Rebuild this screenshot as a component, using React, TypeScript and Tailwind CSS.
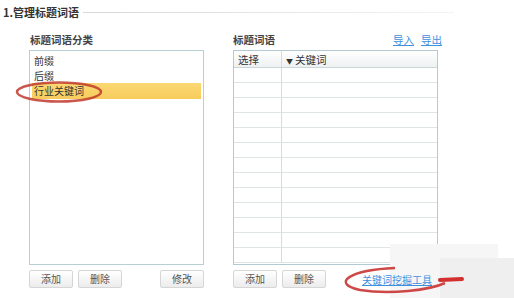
import React from 'react';

const font = { fontFamily: '"Noto Sans CJK SC", "Noto Sans", sans-serif' };

const Btn: React.FC<{ label: string; className?: string }> = ({ label, className = '' }) => (
  <button
    className={`h-[18px] w-[44px] rounded-[2px] border border-[#d6d6d6] bg-gradient-to-b from-white to-[#ececec] text-[10px] leading-none text-[#555] ${className}`}
  >
    {label}
  </button>
);

export default function App() {
  const rows = Array.from({ length: 13 });

  return (
    <div className="relative h-[298px] w-[514px] overflow-hidden bg-white text-[11px] text-[#333]" style={font}>
      {/* faded white patch over the table corner */}
      <div className="absolute left-[390px] top-[244px] z-10 h-[54px] w-[108px] bg-[#f6f6f6]" />
      <div className="absolute left-[440px] top-[258px] z-10 h-[40px] w-[74px] bg-[#efefef]" />

      {/* section title */}
      <div className="flex items-center pl-[3px] pr-[60px] pt-[4px]">
        <span className="whitespace-nowrap text-[11px] font-bold leading-[16px] text-[#333]">1.管理标题词语</span>
        <div className="ml-[4px] h-px flex-1 bg-gradient-to-r from-[#d8d8d8] to-[#f4f4f4]" />
      </div>

      <div className="mt-[12px] flex">
        {/* left panel */}
        <div className="ml-[29px] flex w-[175px] flex-col">
          <div className="h-[16px] pl-[1px] text-[10.5px] font-bold leading-[16px] text-[#444]">标题词语分类</div>
          <div className="mt-[2px] h-[215px] border border-[#b9cfd6] bg-white px-[2px] pt-[2px]">
            <div className="h-[15px] pl-[2px] leading-[15px] text-[10px]">前缀</div>
            <div className="h-[15px] pl-[2px] leading-[15px] text-[10px]">后缀</div>
            <div className="h-[16px] bg-gradient-to-b from-[#fbd873] to-[#f7cc5c] pl-[2px] leading-[16px] text-[10px]">行业关键词</div>
          </div>
          <div className="mt-[5px] flex">
            <Btn label="添加" />
            <Btn label="删除" className="ml-[5px]" />
            <Btn label="修改" className="ml-auto" />
          </div>
        </div>

        {/* right panel */}
        <div className="ml-[29px] flex w-[205px] flex-col">
          <div className="flex h-[16px] items-center">
            <span className="text-[10.5px] font-bold leading-[16px] text-[#444]">标题词语</span>
            <span className="ml-auto text-[10.5px] text-[#3d8fe0] underline">导入</span>
            <span className="ml-[7px] mr-[-4px] text-[10.5px] text-[#3d8fe0] underline">导出</span>
          </div>
          <div className="mt-[2px] h-[215px] overflow-hidden border border-[#b3cad2] bg-white">
            <div className="flex h-[17px] border-b border-[#c9d6da] bg-gradient-to-b from-white to-[#eef1f2] text-[10.5px] leading-[17px]">
              <div className="w-[48px] border-r border-[#d4dcdf] pl-[4px]">选择</div>
              <div className="flex-1 pl-[4px]">
                <span className="mr-[2px] text-[7px]">▼</span>关键词
              </div>
            </div>
            {rows.map((_, i) => (
              <div key={i} className="flex h-[15px] border-b border-[#dfe5e7]">
                <div className="w-[48px] border-r border-[#d4dcdf]" />
                <div className="flex-1" />
              </div>
            ))}
          </div>
          <div className="mt-[5px] flex items-center">
            <Btn label="添加" />
            <Btn label="删除" className="ml-[5px]" />
            <span className="relative z-20 ml-[36px] whitespace-nowrap text-[10px] text-[#3d8fe0] underline">关键词挖掘工具</span>
          </div>
        </div>
      </div>

      {/* red annotation ellipses */}
      <svg className="pointer-events-none absolute left-0 top-0 z-30" width="514" height="298">
        <ellipse cx="59" cy="92" rx="42" ry="9.5" fill="none" stroke="#c0392b" strokeWidth="2.5" opacity="0.85" />
        <path d="M395 268 C 350 270, 330 283, 360 290 C 390 295, 430 290, 445 283" fill="none" stroke="#c62828" strokeWidth="2.5" opacity="0.85" />
        <path d="M440 280 L 462 279" stroke="#d32f2f" strokeWidth="4" strokeLinecap="round" />
      </svg>
    </div>
  );
}
